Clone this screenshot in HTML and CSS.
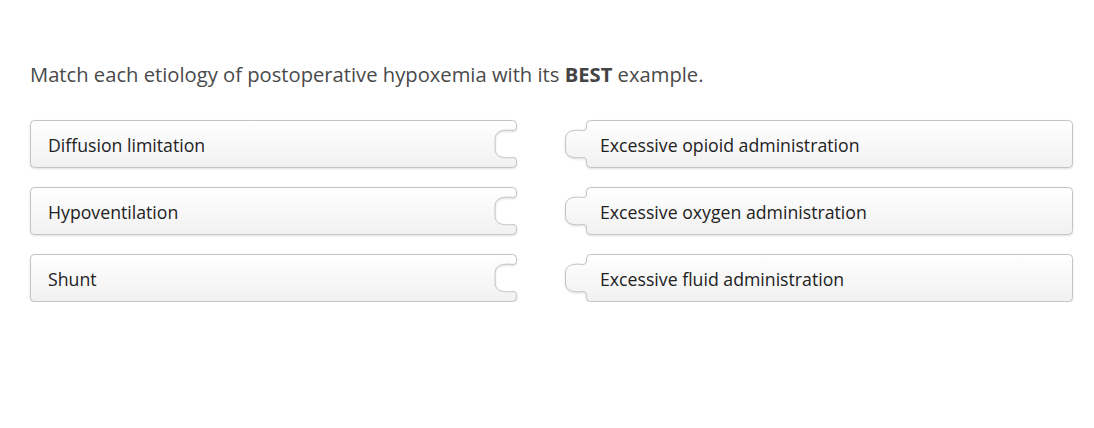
FILE: index.html
```html
<!DOCTYPE html>
<html>
<head>
<meta charset="utf-8">
<link rel="stylesheet" href="styles.css">
</head>
<body>
<div class="page">
  <p class="question">Match each etiology of postoperative hypoxemia with its <b>BEST</b> example.</p>
  <div class="board">
    <div class="piece left">
      <svg class="shape" width="487" height="49" viewBox="0 0 487 49"><defs><linearGradient id="g1" x1="0" y1="0" x2="0" y2="1"><stop offset="0" stop-color="#ffffff"/><stop offset="1" stop-color="#f1f1f1"/></linearGradient></defs><path d="M4.5 0.5 H482.5 Q486.5 0.5 486.5 4.5 V7.5 Q486.5 10.5 483 10.5 C475 9.5 465 10 465 19 V29 C465 38 475 38.5 483 37.5 Q486.5 37.5 486.5 40.5 V43.5 Q486.5 47.5 482.5 47.5 H4.5 Q0.5 47.5 0.5 43.5 V4.5 Q0.5 0.5 4.5 0.5 Z" fill="url(#g1)" stroke="#c4c4c4"/></svg>
      <span class="label">Diffusion limitation</span>
    </div>
    <div class="piece right">
      <svg class="shape" width="508" height="49" viewBox="0 0 508 49"><defs><linearGradient id="g2" x1="0" y1="0" x2="0" y2="1"><stop offset="0" stop-color="#ffffff"/><stop offset="1" stop-color="#f1f1f1"/></linearGradient></defs><path d="M25.5 0.5 H503.5 Q507.5 0.5 507.5 4.5 V43.5 Q507.5 47.5 503.5 47.5 H25.5 Q21.5 47.5 21.5 43.5 V40.5 Q21.5 37.5 18 37.5 C10 38.5 0.5 38 0.5 29 V19 C0.5 10 10 9.5 18 10.5 Q21.5 10.5 21.5 7.5 V4.5 Q21.5 0.5 25.5 0.5 Z" fill="url(#g2)" stroke="#c4c4c4"/></svg>
      <span class="label">Excessive opioid administration</span>
    </div>
    <div class="piece left">
      <svg class="shape" width="487" height="49" viewBox="0 0 487 49"><path d="M4.5 0.5 H482.5 Q486.5 0.5 486.5 4.5 V7.5 Q486.5 10.5 483 10.5 C475 9.5 465 10 465 19 V29 C465 38 475 38.5 483 37.5 Q486.5 37.5 486.5 40.5 V43.5 Q486.5 47.5 482.5 47.5 H4.5 Q0.5 47.5 0.5 43.5 V4.5 Q0.5 0.5 4.5 0.5 Z" fill="url(#g1)" stroke="#c4c4c4"/></svg>
      <span class="label">Hypoventilation</span>
    </div>
    <div class="piece right">
      <svg class="shape" width="508" height="49" viewBox="0 0 508 49"><path d="M25.5 0.5 H503.5 Q507.5 0.5 507.5 4.5 V43.5 Q507.5 47.5 503.5 47.5 H25.5 Q21.5 47.5 21.5 43.5 V40.5 Q21.5 37.5 18 37.5 C10 38.5 0.5 38 0.5 29 V19 C0.5 10 10 9.5 18 10.5 Q21.5 10.5 21.5 7.5 V4.5 Q21.5 0.5 25.5 0.5 Z" fill="url(#g2)" stroke="#c4c4c4"/></svg>
      <span class="label">Excessive oxygen administration</span>
    </div>
    <div class="piece left">
      <svg class="shape" width="487" height="49" viewBox="0 0 487 49"><path d="M4.5 0.5 H482.5 Q486.5 0.5 486.5 4.5 V7.5 Q486.5 10.5 483 10.5 C475 9.5 465 10 465 19 V29 C465 38 475 38.5 483 37.5 Q486.5 37.5 486.5 40.5 V43.5 Q486.5 47.5 482.5 47.5 H4.5 Q0.5 47.5 0.5 43.5 V4.5 Q0.5 0.5 4.5 0.5 Z" fill="url(#g1)" stroke="#c4c4c4"/></svg>
      <span class="label">Shunt</span>
    </div>
    <div class="piece right">
      <svg class="shape" width="508" height="49" viewBox="0 0 508 49"><path d="M25.5 0.5 H503.5 Q507.5 0.5 507.5 4.5 V43.5 Q507.5 47.5 503.5 47.5 H25.5 Q21.5 47.5 21.5 43.5 V40.5 Q21.5 37.5 18 37.5 C10 38.5 0.5 38 0.5 29 V19 C0.5 10 10 9.5 18 10.5 Q21.5 10.5 21.5 7.5 V4.5 Q21.5 0.5 25.5 0.5 Z" fill="url(#g2)" stroke="#c4c4c4"/></svg>
      <span class="label">Excessive fluid administration</span>
    </div>
  </div>
</div>
</body>
</html>
```

FILE: styles.css
```css
html, body {
  margin: 0;
  padding: 0;
  background: #ffffff;
}
.page {
  padding: 60px 0 0 30px;
  font-family: "Open Sans", "Noto Sans", sans-serif;
}
.question {
  margin: 0 0 32px 0;
  font-size: 20.2px;
  line-height: 28px;
  color: #4a4a4a;
}
.question b {
  color: #444;
  font-weight: 700;
}
.board {
  display: grid;
  grid-template-columns: 487px 508px;
  column-gap: 48px;
  row-gap: 19px;
}
.piece {
  position: relative;
  height: 48px;
  display: flex;
  align-items: center;
}
.shape {
  position: absolute;
  left: 0;
  top: 0;
  filter: drop-shadow(0 1px 1px rgba(0,0,0,0.12));
}
.label {
  position: relative;
  padding-top: 2px;
  font-size: 17.7px;
  color: #222;
}
.left .label {
  padding-left: 18px;
}
.right .label {
  padding-left: 35px;
}
```
